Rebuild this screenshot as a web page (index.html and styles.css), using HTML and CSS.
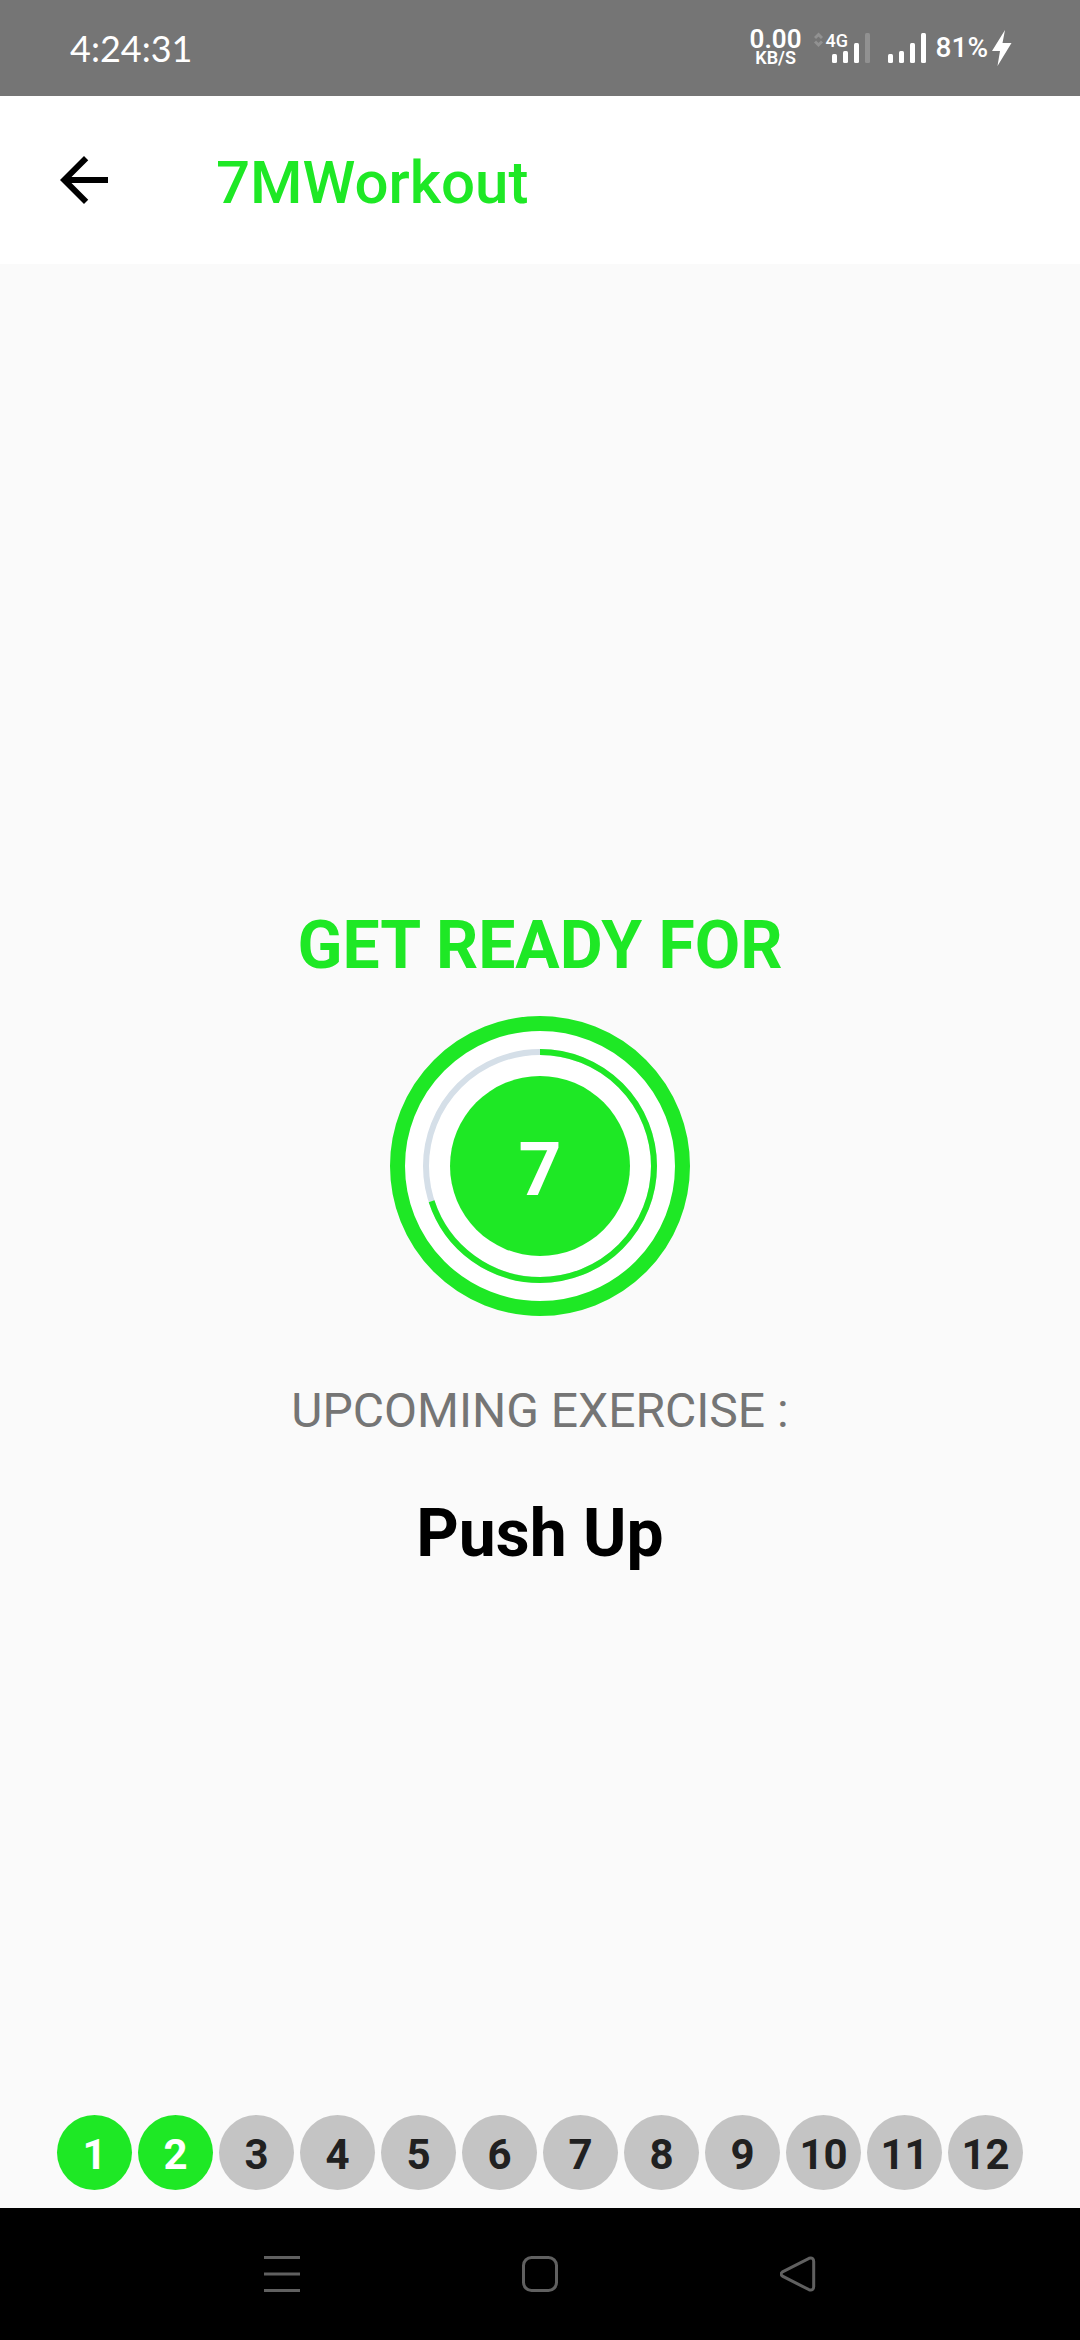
FILE: index.html
```html
<!DOCTYPE html>
<html lang="en">
<head>
<meta charset="utf-8">
<meta name="viewport" content="width=device-width, initial-scale=1">
<title>7MWorkout</title>
<link rel="stylesheet" href="styles.css">
</head>
<body>
<div class="screen">
  <div class="status-bar">
    <time class="clock">4:24:31</time>
    <div class="status-icons">
      <div class="net-speed"><span class="speed-value">0.00</span><span class="speed-unit">KB/S</span></div>
      <div class="mobile-signal">
        <svg width="56" height="36" viewBox="0 0 56 36" aria-hidden="true">
          <path d="M1 8l3.500-3.500L8 8M1 11.500L4.500 15 8 11.500" fill="none" stroke="#919191" stroke-width="3"/>
          <g fill="#fff"><rect x="18" y="24" width="5" height="9" rx="1.500"/><rect x="29" y="21" width="5" height="12" rx="1.500"/><rect x="40" y="13" width="5" height="20" rx="1.500"/></g>
          <rect x="51" y="3" width="5" height="30" rx="1.500" fill="#919191"/>
        </svg>
        <span class="network-type">4G</span>
      </div>
      <svg class="signal" width="38" height="36" viewBox="0 0 38 36" fill="#fff" aria-hidden="true">
        <rect x="0" y="24" width="5" height="9" rx="1.500"/><rect x="11" y="21" width="5" height="12" rx="1.500"/><rect x="22" y="13" width="5" height="20" rx="1.500"/><rect x="33" y="3" width="5" height="30" rx="1.500"/>
      </svg>
      <span class="battery">81%</span>
      <svg class="bolt" width="20" height="36" viewBox="0 0 20 36" fill="#fff" aria-hidden="true"><path d="M13 0L0 21h8L5.500 36 19.500 13h-9z"/></svg>
    </div>
  </div>

  <header class="toolbar">
    <button class="back" type="button" aria-label="Back">
      <svg width="72" height="72" viewBox="0 0 24 24" aria-hidden="true"><path d="M20 11H7.830l5.590-5.590L12 4l-8 8 8 8 1.410-1.410L7.830 13H20v-2z"/></svg>
    </button>
    <h1 class="title">7MWorkout</h1>
  </header>

  <main class="rest">
    <h2 class="headline">GET READY FOR</h2>
    <div class="timer">
      <svg class="progress" viewBox="0 0 234 234" aria-hidden="true">
        <circle class="progress-track" cx="117" cy="117" r="114"/>
        <circle class="progress-value" cx="117" cy="117" r="114" pathLength="10" stroke-dasharray="7 3" transform="rotate(-90 117 117)"/>
      </svg>
      <span class="seconds">7</span>
    </div>
    <p class="upcoming">UPCOMING EXERCISE :</p>
    <p class="exercise">Push Up</p>
  </main>

  <ol class="steps">
    <li class="step done">1</li>
    <li class="step done">2</li>
    <li class="step">3</li>
    <li class="step">4</li>
    <li class="step">5</li>
    <li class="step">6</li>
    <li class="step">7</li>
    <li class="step">8</li>
    <li class="step">9</li>
    <li class="step">10</li>
    <li class="step">11</li>
    <li class="step">12</li>
  </ol>

  <nav class="system-nav" aria-label="System">
    <button class="nav-button" type="button" aria-label="Recent apps">
      <svg width="36" height="36" viewBox="0 0 36 36" aria-hidden="true"><path d="M0 1.500h36M0 18h36M0 34.500h36"/></svg>
    </button>
    <button class="nav-button" type="button" aria-label="Home">
      <svg width="36" height="36" viewBox="0 0 36 36" aria-hidden="true"><rect x="1.500" y="1.500" width="33" height="33" rx="8"/></svg>
    </button>
    <button class="nav-button" type="button" aria-label="Back">
      <svg width="36" height="36" viewBox="0 0 36 36" aria-hidden="true"><path d="M2.500 15.800L29 2.300Q33.700 1 33.700 5.500V30.500Q33.700 35 29 33.700L2.500 20.200Q-0.200 18 2.500 15.800z"/></svg>
    </button>
  </nav>
</div>
</body>
</html>
```
FILE: styles.css
```css
:root {
  --green: #1ee825;
  --page: #fafafa;
}

* {
  box-sizing: border-box;
}

body,
h1,
h2,
p,
ol {
  margin: 0;
  padding: 0;
}

body {
  background: var(--page);
  font-family: Roboto, "Liberation Sans", sans-serif;
}

button {
  padding: 0;
  border: 0;
  background: none;
  cursor: pointer;
}

svg {
  display: block;
}

.screen {
  display: flex;
  flex-direction: column;
  min-height: 100vh;
}

/* Status bar */

.status-bar {
  display: flex;
  align-items: center;
  justify-content: space-between;
  height: 96px;
  padding: 0 68px 0 70px;
  background: #757575;
  color: #fff;
}

.clock {
  font-family: Lato, sans-serif;
  font-size: 36px;
}

.status-icons {
  display: flex;
  align-items: center;
}

.net-speed {
  display: flex;
  flex-direction: column;
  align-items: center;
  margin-right: 12px;
  font-weight: 600;
}

.speed-value {
  font-size: 26px;
  line-height: 19px;
}

.speed-unit {
  font-size: 18px;
  line-height: 17px;
}

.mobile-signal {
  position: relative;
  margin-right: 18px;
}

.network-type {
  position: absolute;
  top: 1px;
  left: 12px;
  font-size: 18px;
  font-weight: 500;
  line-height: 20px;
}

.signal {
  margin-right: 10px;
}

.battery {
  margin-right: 4px;
  font-size: 28px;
  font-weight: 500;
  line-height: 32px;
}

/* Toolbar */

.toolbar {
  display: flex;
  align-items: center;
  gap: 96px;
  height: 168px;
  padding: 0 48px;
  background: #fff;
}

.title {
  padding-top: 4px;
  color: var(--green);
  font-size: 60px;
  font-weight: 500;
}

/* Rest countdown */

.rest {
  display: flex;
  flex: 1;
  flex-direction: column;
  align-items: center;
  justify-content: center;
  padding-top: 100px;
  text-align: center;
}

.headline,
.exercise {
  font-size: 66px;
  font-weight: 700;
  line-height: 80px;
}

.headline {
  margin-bottom: 30px;
  color: var(--green);
}

.timer {
  display: grid;
  place-items: center;
  width: 300px;
  height: 300px;
  margin-bottom: 65px;
  border: 15px solid var(--green);
  border-radius: 50%;
  background: #fff;
}

.progress,
.seconds {
  grid-area: 1 / 1;
}

.progress {
  width: 234px;
  fill: none;
  stroke-width: 6;
}

.progress-track {
  stroke: #d5dfe8;
}

.progress-value {
  stroke: var(--green);
}

.seconds {
  display: grid;
  place-items: center;
  width: 180px;
  height: 180px;
  padding-top: 6px;
  border-radius: 50%;
  background: var(--green);
  color: #fff;
  font-size: 75px;
  font-weight: 700;
}

.upcoming {
  margin-bottom: 53px;
  color: #757575;
  font-size: 48px;
  line-height: 60px;
}

.exercise {
  color: #000;
}

/* Exercise steps */

.steps {
  display: flex;
  flex-wrap: wrap;
  justify-content: center;
  gap: 6px;
  padding-bottom: 18px;
  list-style: none;
}

.step {
  display: grid;
  place-items: center;
  width: 75px;
  height: 75px;
  padding-top: 4px;
  border-radius: 50%;
  background: #c4c4c4;
  color: #212121;
  font-size: 42px;
  font-weight: 700;
}

.step.done {
  background: var(--green);
  color: #fff;
}

/* System navigation */

.system-nav {
  display: grid;
  grid-template-columns: repeat(3, 1fr);
  height: 132px;
  padding: 0 153px;
  background: #000;
}

.nav-button {
  display: grid;
  place-items: center;
}

.nav-button svg {
  fill: none;
  stroke: #606060;
  stroke-width: 3;
}
```
